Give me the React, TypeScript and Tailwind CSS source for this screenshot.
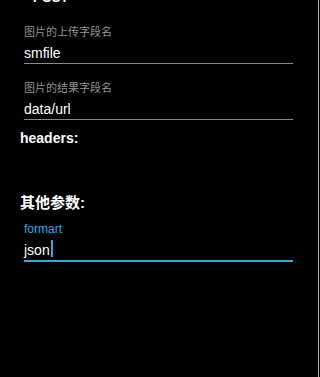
import React from "react"

const font = { fontFamily: '"Liberation Sans", "Noto Sans CJK SC", sans-serif' }

function Field({ label, value, first }: { label: string; value: string; first?: boolean }) {
  return (
    <div className={(first ? "mt-[19px]" : "mt-[17px]") + " ml-[24px] w-[269px]"}>
      <div className="text-[11px] leading-[14px] text-[#939393]">{label}</div>
      <div className="mt-[5px] border-b border-[#8a8a8a] text-[14px] leading-[19px] text-white">{value}</div>
    </div>
  )
}

export default function App() {
  return (
    <div className="flex h-[377px] w-[320px] overflow-hidden bg-black" style={font}>
      <div className="min-w-0 flex-1">
        <div className="-mt-[10px] pl-[33px] text-[13px] font-bold leading-[16px] text-white">POST</div>

        <Field first label="图片的上传字段名" value="smfile" />
        <Field label="图片的结果字段名" value="data/url" />

        <div className="mt-[8px] pl-[20px] text-[14px] font-bold leading-[20px] text-white">headers:</div>

        <div className="mt-[45px] pl-[20px] text-[15px] font-bold leading-[20px] text-white">其他参数:</div>

        <div className="ml-[24px] mt-[9px] w-[269px]">
          <div className="text-[12px] leading-[14px] text-[#31a8e0]">formart</div>
          <div className="mt-[5px] flex h-[21px] items-start border-b-2 border-[#31a8e0] text-[14px] leading-[19px] text-white">
            <span>json</span>
            <span className="ml-px mt-[-1px] h-[17px] w-[2px] bg-[#31a8e0]" />
          </div>
        </div>
      </div>
      <div className="w-px bg-[#b3b3b3]" />
      <div className="w-px" />
    </div>
  )
}
